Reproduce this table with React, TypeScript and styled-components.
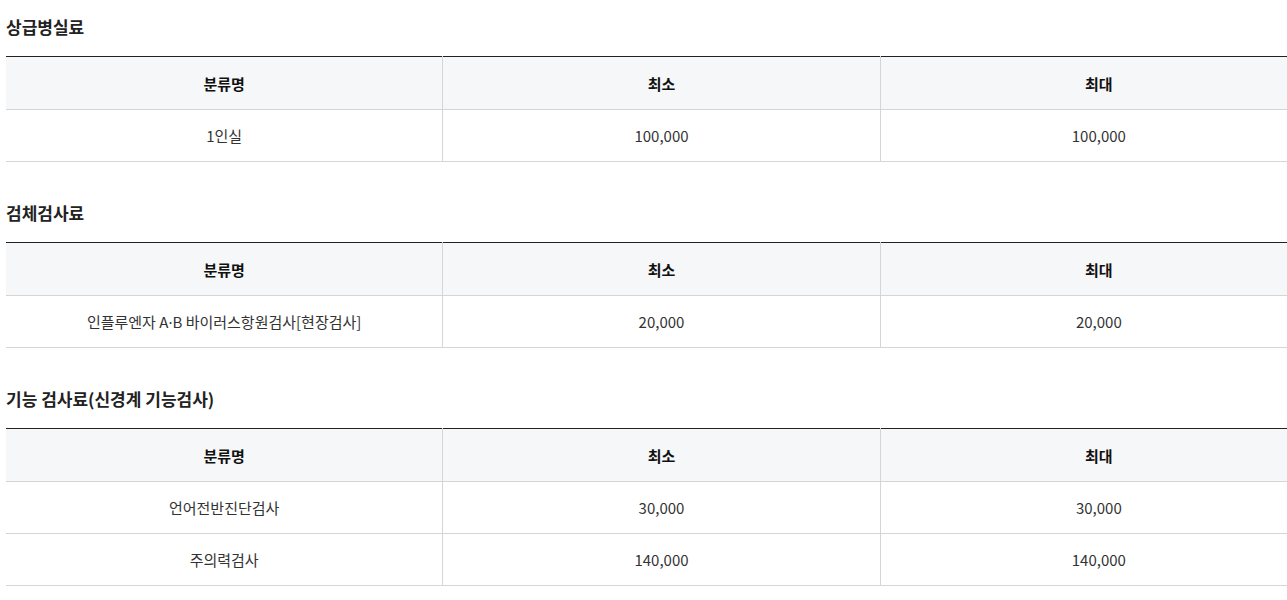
import React from "react";
import styled, { createGlobalStyle } from "styled-components";

const GlobalStyle = createGlobalStyle`
  html, body { margin: 0; padding: 0; background: #fff; overflow-x: hidden; }
  body { font-family: "Noto Sans CJK KR", "Noto Sans", sans-serif; color: #333; }
`;

const Page = styled.div`
  padding: 15px 0 0 6px;
`;

const Section = styled.section`
  & + & { margin-top: 39px; }
`;

const Title = styled.h3`
  margin: 0 0 17px;
  font-size: 17px;
  line-height: 24px;
  font-weight: 700;
  color: #222;
`;

const Table = styled.table`
  width: 1311px;
  border-collapse: collapse;
  table-layout: fixed;
  border-top: 1px solid #222;
`;

const Th = styled.th`
  width: 33.333%;
  height: 52px;
  padding: 0;
  background: #f6f7f9;
  border-bottom: 1px solid #d5d5d5;
  font-size: 15px;
  font-weight: 700;
  color: #111;
  text-align: center;
  & + & { border-left: 1px solid #d5d5d5; }
`;

const Td = styled.td`
  height: 51px;
  padding: 0;
  border-bottom: 1px solid #d5d5d5;
  font-size: 15px;
  font-weight: 400;
  color: #333;
  text-align: center;
  & + & { border-left: 1px solid #d5d5d5; }
`;

const Dot = styled.span`
  font-family: "Noto Sans", sans-serif;
`;

type Row = [React.ReactNode, string, string];

const sections: { title: string; rows: Row[] }[] = [
  { title: "상급병실료", rows: [["1인실", "100,000", "100,000"]] },
  {
    title: "검체검사료",
    rows: [[<>인플루엔자 A<Dot>·</Dot>B 바이러스항원검사[현장검사]</>, "20,000", "20,000"]],
  },
  {
    title: "기능 검사료(신경계 기능검사)",
    rows: [
      ["언어전반진단검사", "30,000", "30,000"],
      ["주의력검사", "140,000", "140,000"],
    ],
  },
];

export default function App() {
  return (
    <>
      <GlobalStyle />
      <Page>
        {sections.map((s) => (
          <Section key={s.title}>
            <Title>{s.title}</Title>
            <Table>
              <thead>
                <tr>
                  <Th>분류명</Th>
                  <Th>최소</Th>
                  <Th>최대</Th>
                </tr>
              </thead>
              <tbody>
                {s.rows.map((r, i) => (
                  <tr key={i}>
                    <Td>{r[0]}</Td>
                    <Td>{r[1]}</Td>
                    <Td>{r[2]}</Td>
                  </tr>
                ))}
              </tbody>
            </Table>
          </Section>
        ))}
      </Page>
    </>
  );
}
